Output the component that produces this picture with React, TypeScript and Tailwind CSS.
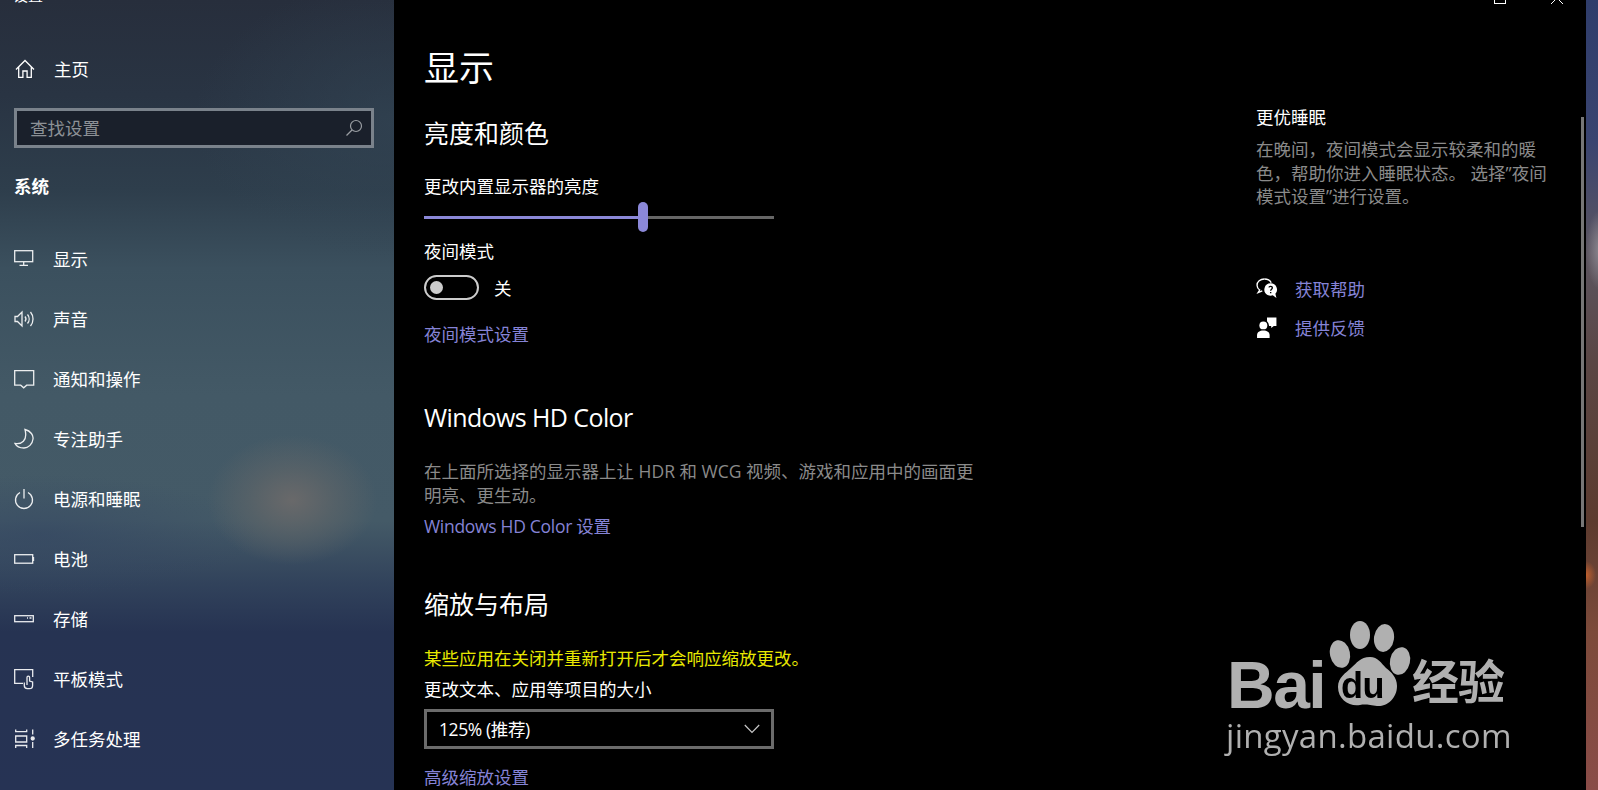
import type { ReactNode } from "react"

const FONT = "font-['Open_Sans','Noto_Sans_CJK_SC',sans-serif]"

const NavIcon = ({ children }: { children: ReactNode }) => (
  <svg width="22" height="22" viewBox="0 0 22 22" fill="none" stroke="#fff" strokeWidth="1.3" className="shrink-0 opacity-90">
    {children}
  </svg>
)

const NAV_ITEMS: { label: string; icon: ReactNode }[] = [
  {
    label: "显示",
    icon: (
      <>
        <rect x="0.7" y="2.7" width="18" height="11" />
        <path d="M9.7 14v3M5.5 17.3h8.5" />
      </>
    ),
  },
  {
    label: "声音",
    icon: (
      <>
        <path d="M1 8.5v5h2.5L8 18V4L3.5 8.5z" />
        <path d="M11 8.5a4 4 0 0 1 0 5M13.5 6.5a7 7 0 0 1 0 9M16.5 4a11 11 0 0 1 0 14" />
      </>
    ),
  },
  {
    label: "通知和操作",
    icon: <path d="M0.7 2.7h19v14.5h-7l-3 2.6-3-2.6h-6z" />,
  },
  {
    label: "专注助手",
    icon: <path d="M11 1.5C17 3 19.5 7.500 19 11C18.500 16 14.500 20 10 20C6 20 2.500 18.500 1 15.500C7 16.500 14 13 11 1.500z" />,
  },
  {
    label: "电源和睡眠",
    icon: (
      <>
        <path d="M6 4.5a8.5 8.5 0 1 0 8 0" />
        <path d="M10 1v9.5" />
      </>
    ),
  },
  {
    label: "电池",
    icon: (
      <>
        <rect x="0.7" y="6.7" width="18" height="8.5" />
        <path d="M19.5 9v4" />
      </>
    ),
  },
  {
    label: "存储",
    icon: (
      <>
        <rect x="0.7" y="7.7" width="18.6" height="6" />
        <path d="M13 10h1M15.5 10h2" />
      </>
    ),
  },
  {
    label: "平板模式",
    icon: (
      <>
        <path d="M9 15.3H0.7V1.7h18V9" />
        <path d="M13 17V9.5a1.3 1.3 0 0 1 2.6 0V13l3 1v3.5a3.2 3.2 0 0 1-3.2 3.2h-2a3.2 3.2 0 0 1-3.1-3.2V14.5" />
      </>
    ),
  },
  {
    label: "多任务处理",
    icon: (
      <>
        <path d="M1.7 1.5v2.2h11V1.5M1.7 8h11v6h-11zM1.7 20v-2.5h11V20" />
        <path d="M18.7 1.5v5M18.7 14v6" />
        <circle cx="18.7" cy="10.5" r="1.5" fill="#fff" />
      </>
    ),
  },
]

function Sidebar() {
  return (
    <div className="w-[394px] shrink-0 h-full overflow-hidden text-white text-[17.5px] leading-[24px] bg-[radial-gradient(ellipse_85px_65px_at_292px_500px,#69696a_0%,#5f6568a0_50%,transparent_100%),radial-gradient(ellipse_220px_60px_at_40px_535px,#33456299_0%,transparent_100%),radial-gradient(ellipse_200px_140px_at_394px_120px,#33465599_0%,transparent_100%),linear-gradient(180deg,#272e3c_0%,#293443_12%,#2e3e4c_24%,#3b505e_34%,#435966_50%,#445a67_66%,#31425b_74%,#263352_80%,#263354_100%)]">
      <div className="h-[5px] overflow-hidden flex items-end pl-[13px]">
        <span className="text-[15px] leading-[20px]">设置</span>
      </div>
      <div className="mt-[34px] h-[60px] flex items-center pl-[15px]">
        <svg width="20" height="20" viewBox="0 0 20 20" fill="none" stroke="#fff" strokeWidth="1.3">
          <path d="M1 10.5 10 1.5l9 9M3.7 8v10.3h4.2V12h4.2v6.3h4.2V8" />
        </svg>
        <span className="ml-[19px]">主页</span>
      </div>
      <div className="mt-[9px] ml-[14px] w-[360px] h-[40px] border-[3px] border-[#7a828b] bg-[#1a202b] flex items-center justify-between pl-[13px] pr-[8px]">
        <span className="text-[#8d9196]">查找设置</span>
        <svg width="18" height="18" viewBox="0 0 18 18" fill="none" stroke="#9a9ea3" strokeWidth="1.2">
          <circle cx="11" cy="7" r="5.5" />
          <path d="M7 11 1.5 16.5" />
        </svg>
      </div>
      <div className="mt-[26px] pl-[14px] font-bold">系统</div>
      <div className="mt-[31px]">
        {NAV_ITEMS.map((item) => (
          <div key={item.label} className="h-[60px] flex items-center pl-[14px]">
            <NavIcon>{item.icon}</NavIcon>
            <span className="ml-[17px]">{item.label}</span>
          </div>
        ))}
      </div>
    </div>
  )
}

function Content() {
  return (
    <div className="w-[862px] shrink-0 pl-[30px]">
      <h1 className="text-[35px] leading-[44px] font-normal">显示</h1>

      <h2 className="mt-[27px] text-[25px] leading-[32px]">亮度和颜色</h2>
      <p className="mt-[25px] h-[24px]">更改内置显示器的亮度</p>
      <div className="mt-[4px] w-[350px] h-[30px] flex items-center">
        <div className="w-[214px] h-[3px] bg-[#8b88d8]" />
        <div className="w-[10px] h-[30px] rounded-full bg-[#8b88d8]" />
        <div className="flex-1 h-[3px] bg-[#666666]" />
      </div>
      <p className="mt-[7px] h-[24px]">夜间模式</p>
      <div className="mt-[12px] flex items-center">
        <div className="w-[55px] h-[25px] rounded-full border-[2px] border-[#cccccc] flex items-center pl-[4px]">
          <div className="w-[13px] h-[13px] rounded-full bg-[#cccccc]" />
        </div>
        <span className="ml-[15px]">关</span>
      </div>
      <p className="mt-[22px] h-[24px] text-[#8583d6]">夜间模式设置</p>

      <h2 className="mt-[55px] text-[25px] leading-[32px] tracking-[-0.6px]">Windows HD Color</h2>
      <p className="mt-[26px] w-[560px] leading-[24px] text-[#8a8a8a]">
        在上面所选择的显示器上让 HDR 和 WCG 视频、游戏和应用中的画面更明亮、更生动。
      </p>
      <p className="mt-[7px] h-[24px] text-[#8583d6] tracking-[-0.3px]">Windows HD Color 设置</p>

      <h2 className="mt-[50px] text-[25px] leading-[32px]">缩放与布局</h2>
      <p className="mt-[26px] h-[24px] text-[#e8e800] whitespace-nowrap">某些应用在关闭并重新打开后才会响应缩放更改。</p>
      <p className="mt-[7px] h-[24px]">更改文本、应用等项目的大小</p>
      <div className="mt-[8px] w-[350px] h-[40px] border-[3px] border-[#6b6b6b] flex items-center justify-between pl-[12px] pr-[11px]">
        <span className="tracking-[-0.4px]">125% (推荐)</span>
        <svg width="16" height="10" viewBox="0 0 16 10" fill="none" stroke="#c8c8c8" strokeWidth="1.2">
          <path d="M0.8 1 8 8.5 15.2 1" />
        </svg>
      </div>
      <p className="mt-[16px] h-[24px] text-[#8583d6]">高级缩放设置</p>
    </div>
  )
}

function RightRail() {
  return (
    <div className="w-[320px] shrink-0 pt-[59px]">
      <p className="h-[24px]">更优睡眠</p>
      <p className="mt-[9px] leading-[23.5px] text-[#8a8a8a] whitespace-nowrap">
        在晚间，夜间模式会显示较柔和的暖
        <br />
        色，帮助你进入睡眠状态。 选择”夜间
        <br />
        模式设置”进行设置。
      </p>
      <div className="mt-[68px] h-[24px] flex items-center">
        <svg width="22" height="22" viewBox="0 0 21 21" className="shrink-0">
          <path d="M8 1C4 1 1 3.5 1 7c0 2 1 3.5 2.5 4.5L2 14l4-1.700" fill="none" stroke="#fff" strokeWidth="1.300" />
          <path d="M8 1c3 0 5.500 1.500 6.500 3.500" fill="none" stroke="#fff" strokeWidth="1.300" />
          <path d="M14 5a6 6 0 0 0-3 11.200c2 .8 3.500.8 5 .3l3.500 2.500-1-4A6 6 0 0 0 14 5z" fill="#fff" />
          <path d="M12.300 9c.4-1.400 3.300-1.400 3.300.4 0 1.300-1.600 1.300-1.600 2.800M14 13.300v1.300" fill="none" stroke="#000" strokeWidth="1.300" />
        </svg>
        <span className="ml-[17px] text-[#8583d6]">获取帮助</span>
      </div>
      <div className="mt-[15px] h-[24px] flex items-center">
        <svg width="22" height="22" viewBox="0 0 21 21" className="shrink-0">
          <path d="M10.500 0.500H19.500V8.500H17L14.500 10.500V8.500H12.500A6 6 0 0 0 10.500 4z" fill="#fff" />
          <circle cx="7" cy="8" r="3.800" fill="#fff" />
          <path d="M1 20v-2.500C1 14.500 3.500 13 7 13s6 1.500 6 4.500V20z" fill="#fff" />
        </svg>
        <span className="ml-[17px] text-[#8583d6]">提供反馈</span>
      </div>
    </div>
  )
}

function Watermark() {
  return (
    <div className="absolute left-[1226px] top-[615px] w-[290px] h-[145px] text-[#b0b0b0] blur-[0.4px]">
      <span className="absolute left-[1px] top-[45px] text-[66px] leading-[50px] font-bold font-['Liberation_Sans',sans-serif] tracking-[-1.5px]">Bai</span>
      <svg width="90" height="95" viewBox="0 0 90 95" className="absolute left-[98px] top-[2px]" fill="#b0b0b0">
        <ellipse cx="16" cy="37" rx="10" ry="14" transform="rotate(-12 16 37)" />
        <ellipse cx="36" cy="18" rx="10" ry="14" />
        <ellipse cx="60" cy="21" rx="10" ry="14" transform="rotate(8 60 21)" />
        <ellipse cx="76" cy="44" rx="10" ry="14" transform="rotate(12 76 44)" />
        <path d="M46 40c8 0 11 6 16 11 5 4 11 9 11 18 0 13-11 21-20 20-7-1-12-2-17-1-10 2-22-5-22-18 0-10 8-14 13-19 6-5 9-11 19-11z" />
      </svg>
      <span className="absolute left-[115px] top-[51px] text-[36px] leading-[40px] font-bold text-black font-['Liberation_Sans',sans-serif] tracking-[-0.5px]">du</span>
      <span className="absolute left-[186px] top-[36px] text-[47px] leading-[60px] font-bold whitespace-nowrap tracking-[-1px]">经验</span>
      <span className="absolute left-0 top-[99px] text-[33px] leading-[44px] whitespace-nowrap tracking-[0.3px]">jingyan.baidu.com</span>
    </div>
  )
}

export default function App() {
  return (
    <div className={`relative w-[1598px] h-[790px] overflow-hidden flex bg-black text-white text-[17.5px] leading-[24px] ${FONT}`}>
      <Sidebar />

      <div className="w-[1192px] shrink-0 h-full overflow-hidden">
        {/* window buttons, mostly cut off by the top of the capture */}
        <div className="h-[4px] overflow-hidden flex justify-end items-end pr-[23px]">
          <div className="w-[12px] h-[12px] border border-white mr-[45px] shrink-0" />
          <svg width="12" height="12" viewBox="0 0 12 12" fill="none" stroke="#fff" className="shrink-0">
            <path d="M0 0 12 12M12 0 0 12" />
          </svg>
        </div>
        <div className="h-[42px]" />
        <div className="flex">
          <Content />
          <RightRail />
        </div>
      </div>

      <div className="flex-1 h-full bg-[radial-gradient(ellipse_10px_14px_at_0px_575px,#c0602e_0%,transparent_100%),radial-gradient(ellipse_14px_40px_at_14px_250px,#8c8890_0%,transparent_100%),linear-gradient(180deg,#2f3d6b_0%,#3a4470_18%,#5c5560_32%,#5a4644_46%,#5c3b2f_66%,#7c4a3a_80%,#8a4c48_100%)]" />

      {/* scrollbar thumb */}
      <div className="absolute left-[1581px] top-[117px] w-[3px] h-[410px] bg-[#777777]" />

      <Watermark />
    </div>
  )
}
